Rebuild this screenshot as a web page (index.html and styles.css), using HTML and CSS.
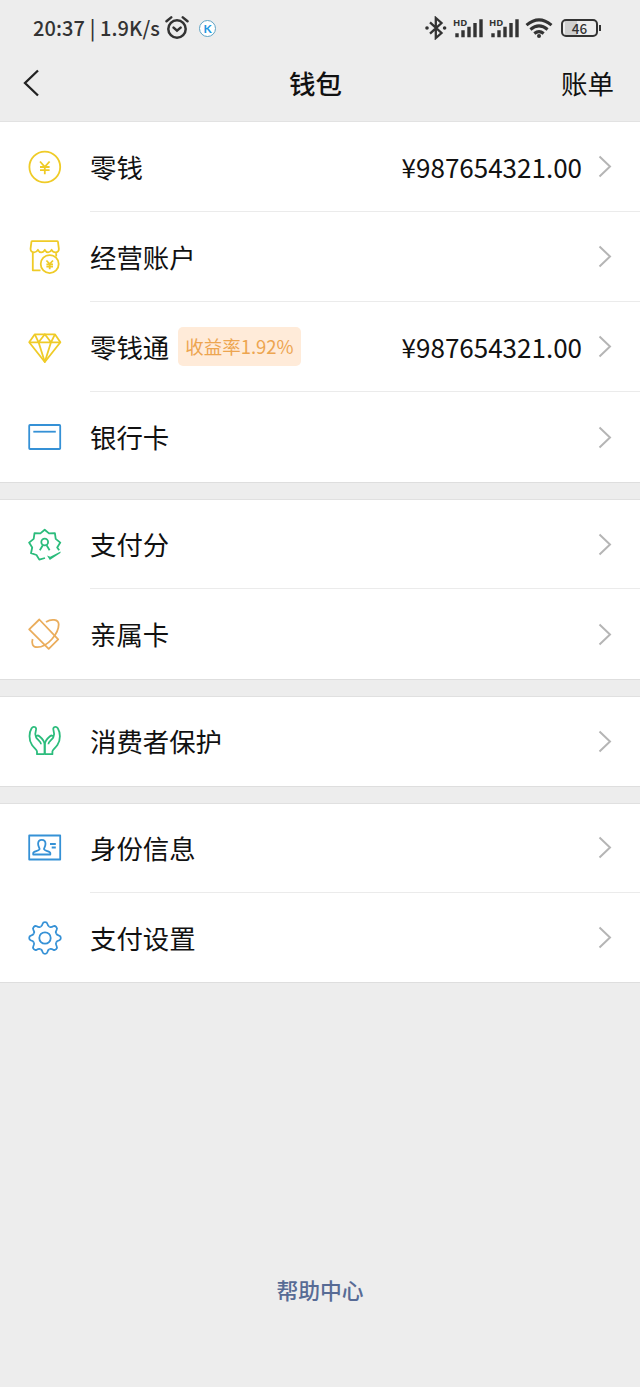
FILE: index.html
```html
<!DOCTYPE html>
<html lang="zh-CN">
<head>
<meta charset="utf-8">
<title>钱包</title>
<link rel="stylesheet" href="styles.css">
</head>
<body>
<svg class="defs" width="0" height="0">
  <defs>
    <path id="tooth" d="M12.4 5.9C13.7 5.4 14.2 4.8 14.6 2.9Q15 1.2 17 1.2Q19 1.2 19.4 2.9C19.8 4.8 20.3 5.4 21.6 5.9"/>
    <path id="arrow" d="M1.5 1.5L12 11.5L1.5 21.5"/>
    <path id="bars" d="M4 21.3v-4M10 21.3v-7M16 21.3v-10.5M22 21.3V7M28 21.3V3.3"/>
  </defs>
</svg>

<div class="status">
  <span class="clock">20:37 | 1.9K/s</span>
  <svg class="alarm" width="24" height="24" viewBox="0 0 24 24"><circle cx="12" cy="13" r="8.7"/><path d="M1.5 5.2L6.2 1.4M22.5 5.2L17.8 1.4M8.6 11.6L12 14.6L15.6 11.6"/></svg>
  <span class="kbadge">K</span>
  <div class="system">
    <svg class="bt" width="22" height="24" viewBox="0 0 22 24"><path d="M5 6.3L16.5 17L10.8 22V2L16.5 7L5 17.7"/><circle cx="2" cy="12" r="1.8"/><circle cx="19.6" cy="12" r="1.8"/></svg>
    <div class="signal"><span>HD</span><svg width="30" height="24" viewBox="0 0 30 24"><use href="#bars"/></svg></div>
    <div class="signal second"><span>HD</span><svg width="30" height="24" viewBox="0 0 30 24"><use href="#bars"/></svg></div>
    <svg class="wifi" width="28" height="21" viewBox="0 0 28 21"><path d="M1.5 7.2Q14 -3.4 26.5 7.2M5.4 11.5Q14 4.3 22.6 11.5M9.3 15.5Q14 11.7 18.7 15.5"/><circle cx="14" cy="18" r="2"/></svg>
    <div class="battery"><span>46</span></div><i class="cap"></i>
  </div>
</div>

<header class="nav">
  <svg class="back" width="18" height="28" viewBox="0 0 18 28"><path d="M15 1.5L2 14L15 26.5"/></svg>
  <h1>钱包</h1>
  <a class="bill">账单</a>
</header>

<main>
  <section class="group">
    <div class="row">
      <svg class="icon gold" viewBox="0 0 34 34"><circle cx="16.8" cy="17" r="15.4"/><path d="M12 11.5L16.8 16.8L21.6 11.5M12 17H21.6M12 20.2H21.6M16.8 17V24.2"/></svg>
      <div class="cell"><span class="label">零钱</span><span class="amount">¥987654321.00</span><svg class="chevron" viewBox="0 0 14 23"><use href="#arrow"/></svg></div>
    </div>
    <div class="row">
      <svg class="icon gold" viewBox="0 0 34 34"><path d="M12.5 30.3H4.8V12.2M28.2 12.2V16.5M4 1.2H29.2Q30 1.2 30 2L30.8 8.3C31.2 11.2 29.4 12.3 27.5 12.3C25.2 12.3 24.2 11 23.6 9.8C22.7 11.5 21.6 12.3 20.1 12.3C18.5 12.3 17.4 11 16.8 9.8C16 11.5 14.9 12.3 13.2 12.3C11.6 12.3 10.5 11 9.9 9.8C9.1 11.3 8 12.3 6.2 12.3C4 12.3 2.2 10.9 2.6 8.3L3.4 2Q3.4 1.2 4 1.2Z"/><circle cx="21.7" cy="24.1" r="9"/><path d="M18.4 20.5L21.7 24L25 20.5M18.4 24.3H25M18.4 26.7H25M21.7 24.3V29.2"/></svg>
      <div class="cell"><span class="label">经营账户</span><svg class="chevron" viewBox="0 0 14 23"><use href="#arrow"/></svg></div>
    </div>
    <div class="row">
      <svg class="icon gold" viewBox="0 0 34 34"><path d="M1.2 12.3L6.8 4.3H26.9L32.4 12.3L16.8 32Z"/><path d="M1.2 12.3H32.4M6.8 4.3L10.6 12.3L16.8 4.3L23 12.3L26.9 4.3M10.6 12.3L16.8 32L23 12.3"/></svg>
      <div class="cell"><span class="label">零钱通</span><span class="rate">收益率1.92%</span><span class="amount">¥987654321.00</span><svg class="chevron" viewBox="0 0 14 23"><use href="#arrow"/></svg></div>
    </div>
    <div class="row">
      <svg class="icon blue" viewBox="0 0 34 34"><rect x="1.2" y="5" width="31" height="24" rx=".8"/><path d="M5.3 11.7H27.8"/></svg>
      <div class="cell"><span class="label">银行卡</span><svg class="chevron" viewBox="0 0 14 23"><use href="#arrow"/></svg></div>
    </div>
  </section>

  <section class="group">
    <div class="row">
      <svg class="icon green" viewBox="0 0 34 34"><path d="M31.2 22.3L29.2 19.5L32.3 14.6L27.7 10.9L26.9 5.2L21 5.4L16.7 1.8L12.4 5.4L6.5 5.2L5.7 10.9L1.1 14.6L4.2 19.5L3 25.2L8.5 27L11.3 31.6L17 30"/><circle cx="16.7" cy="14" r="3.4"/><path d="M14.8 17.2L11.8 22.2M18.6 17.2L21.6 22.2"/><path class="solid" d="M19 27.6L22.2 28.8L32.6 23.6L32.4 24.9L21.8 32Z"/></svg>
      <div class="cell"><span class="label">支付分</span><svg class="chevron" viewBox="0 0 14 23"><use href="#arrow"/></svg></div>
    </div>
    <div class="row">
      <svg class="icon orange" viewBox="0 0 34 34"><path d="M11.3 2.5L30.2 22.3L20.7 31.8L1.2 12.3Z"/><path d="M18 5C23 1.7 30.7 1.8 30.7 7.6C30.7 16.5 19.5 30.2 9.3 30.2C4.7 30.2 3.2 26.6 4.6 22"/></svg>
      <div class="cell"><span class="label">亲属卡</span><svg class="chevron" viewBox="0 0 14 23"><use href="#arrow"/></svg></div>
    </div>
  </section>

  <section class="group">
    <div class="row">
      <svg class="icon green" viewBox="0 0 34 34"><path id="hand" d="M16.7 30.2H9V27.5C9 25.7 6.2 24.2 4 21C.4 15.7 1.1 8.4 3.6 4.3C5.3 1.7 8.7 3 8 5.8C7.1 8.8 7.2 11.1 7.9 12.7C8.5 11.2 10.1 11.2 11.4 12.3C14.8 15.1 16.7 17.4 16.7 21V30.2M7.9 12.7C8.5 15.4 12.8 16.8 13 20.2"/><use href="#hand" transform="matrix(-1 0 0 1 33.4 0)"/></svg>
      <div class="cell"><span class="label">消费者保护</span><svg class="chevron" viewBox="0 0 14 23"><use href="#arrow"/></svg></div>
    </div>
  </section>

  <section class="group">
    <div class="row">
      <svg class="icon blue" viewBox="0 0 34 34"><rect x="1.2" y="4.5" width="31" height="24"/><path d="M22 13H27.8M23.7 16.5H27.8M5.2 23.5V21.9C5.2 20.2 11.6 19.9 11.6 18C11.6 17 10.1 15.5 10.1 12.8C10.1 10.5 11.6 8.9 13.8 8.9C16 8.9 17.5 10.5 17.5 12.8C17.5 15.5 16 17 16 18C16 19.9 22.3 20.2 22.3 21.9V23.5Z"/></svg>
      <div class="cell"><span class="label">身份信息</span><svg class="chevron" viewBox="0 0 14 23"><use href="#arrow"/></svg></div>
    </div>
    <div class="row">
      <svg class="icon blue" viewBox="0 0 34 34"><circle cx="17" cy="17" r="5.7"/><use href="#tooth"/><use href="#tooth" transform="rotate(45 17 17)"/><use href="#tooth" transform="rotate(90 17 17)"/><use href="#tooth" transform="rotate(135 17 17)"/><use href="#tooth" transform="rotate(180 17 17)"/><use href="#tooth" transform="rotate(225 17 17)"/><use href="#tooth" transform="rotate(270 17 17)"/><use href="#tooth" transform="rotate(315 17 17)"/></svg>
      <div class="cell"><span class="label">支付设置</span><svg class="chevron" viewBox="0 0 14 23"><use href="#arrow"/></svg></div>
    </div>
  </section>
</main>

<footer class="help">帮助中心</footer>
</body>
</html>
```
FILE: styles.css
```css
* { box-sizing: border-box; }
body {
  margin: 0;
  width: 640px;
  height: 1387px;
  display: flex;
  flex-direction: column;
  background: #ededed;
  color: #111;
  font-family: "Noto Sans CJK SC", sans-serif;
  overflow: hidden;
}
svg { fill: none; flex: none; display: block; }
.defs { position: absolute; }

.status {
  height: 56px;
  flex: none;
  display: flex;
  align-items: center;
  padding-left: 33px;
  color: #333;
}
.clock {
  width: 132px;
  font: 500 20px/28px "Noto Sans CJK SC", sans-serif;
  letter-spacing: 0.1px;
  white-space: pre;
}
.alarm { stroke: #333; stroke-width: 2.5; stroke-linecap: round; }
.kbadge {
  width: 17px;
  height: 17px;
  margin-left: 10px;
  border: 1px solid #5fa3c4;
  border-radius: 50%;
  background: #fff;
  color: #2196e0;
  font: 700 12px/15px Lato, sans-serif;
  text-align: center;
}
.system { display: flex; align-items: center; margin-left: 209px; }
.bt { stroke: #333; stroke-width: 2.3; }
.bt circle { fill: #333; stroke: none; }
.signal {
  display: grid;
  width: 30px;
  margin-left: 6px;
  stroke: #333;
  stroke-width: 3.4;
}
.signal > * { grid-area: 1 / 1; }
.signal span { font: 700 9.5px/13px "Open Sans", sans-serif; stroke: none; }
.second { margin-left: 6px; }
.wifi { margin-left: 6px; stroke: #333; stroke-width: 3; }
.wifi circle { fill: #333; stroke: none; }
.battery {
  width: 37px;
  height: 18px;
  margin-left: 8px;
  border: 2px solid #333;
  border-radius: 5px;
  background: linear-gradient(90deg, #ededed 2px, #cfcfcf 2px 14px, #ededed 14px);
  font: 500 13.5px/14px "Noto Sans CJK SC", sans-serif;
  text-align: center;
}
.cap { width: 2px; height: 6px; margin-left: 1px; background: #333; }

.nav {
  height: 66px;
  flex: none;
  display: grid;
  grid-template-columns: 1fr auto 1fr;
  align-items: center;
  padding: 0 26px 12px 23px;
  border-bottom: 1px solid #e2e2e2;
}
.back { stroke: #222; stroke-width: 2.3; }
.nav h1 { margin: 0 3px 0 -3px; font-size: 26.5px; line-height: 40px; font-weight: 500; }
.bill { justify-self: end; font-size: 26.5px; line-height: 40px; }

.group {
  margin-bottom: 15.7px;
  background: #fff;
  border-bottom: 1px solid #dedede;
}
.group + .group { border-top: 1px solid #e0e0e0; }
.row { display: flex; align-items: center; height: 90.1px; padding-left: 28px; }
.group + .group .row { height: 89.4px; }
.icon { width: 34px; height: 34px; stroke-width: 1.8; stroke-linejoin: round; }
.gold { stroke: #efcb27; }
.blue { stroke: #3591d6; }
.green { stroke: #2bbc7c; }
.orange { stroke: #eaad5c; }
.solid { fill: #2bbc7c; stroke: none; }
.cell {
  flex: 1;
  height: 100%;
  display: flex;
  align-items: center;
  margin-left: 28px;
  padding-right: 28px;
  border-bottom: 1px solid #ebebeb;
}
.row:last-child .cell { border-bottom: 0; }
.label { font-size: 26.4px; line-height: 40px; }
.rate {
  height: 39px;
  margin-left: 9px;
  padding: 0 7px;
  border-radius: 5px;
  background: #ffebd9;
  color: #eda550;
  font: 18.5px/38px "Noto Sans CJK SC", sans-serif;
}
.amount { margin-left: auto; margin-right: 16px; font-size: 26px; line-height: 40px; }
.chevron { width: 14px; height: 23px; margin-left: auto; stroke: #b5b5b5; stroke-width: 2; }
.amount + .chevron { margin-left: 0; }

.help {
  margin: auto 0 80px;
  text-align: center;
  color: #576b95;
  font-size: 21.8px;
  line-height: 34px;
  font-weight: 500;
}
```
